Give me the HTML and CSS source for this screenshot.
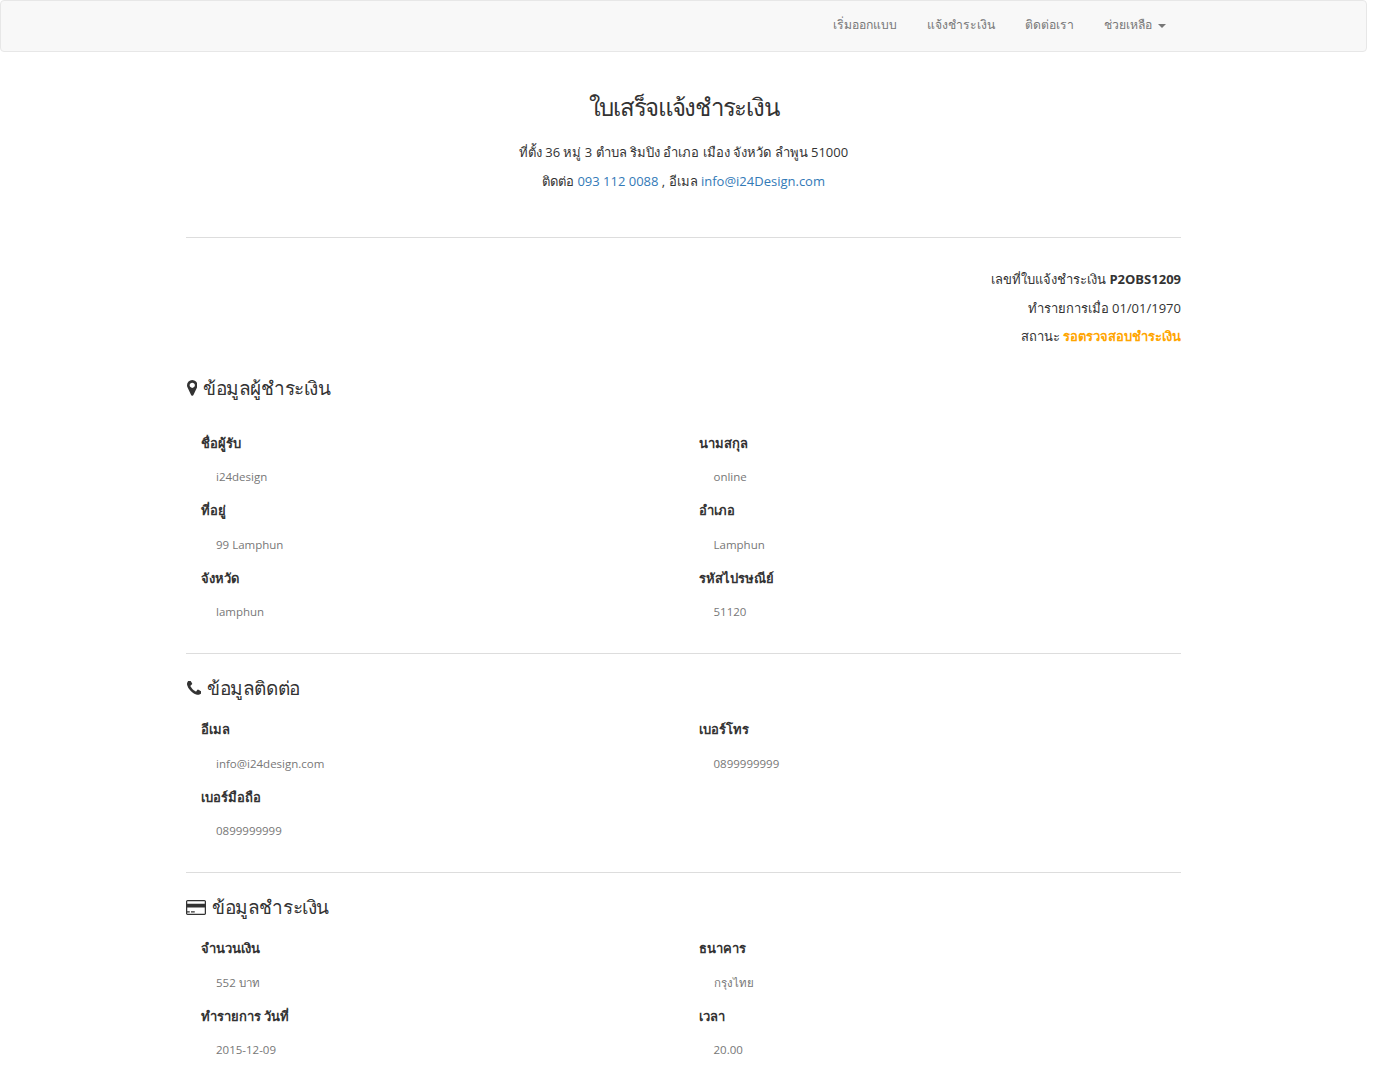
FILE: index.html
```html
<!DOCTYPE html>
<html lang="th">
<head>
<meta charset="utf-8">
<title>ใบเสร็จแจ้งชำระเงิน</title>
<link rel="stylesheet" href="styles.css">
</head>
<body>
<nav class="navbar">
  <ul class="nav">
    <li>เริ่มออกแบบ</li>
    <li>แจ้งชำระเงิน</li>
    <li>ติดต่อเรา</li>
    <li>ช่วยเหลือ <span class="caret"></span></li>
  </ul>
</nav>
<main class="container">
  <header class="head">
    <h2 class="title">ใบเสร็จแจ้งชำระเงิน</h2>
    <p>ที่ตั้ง 36 หมู่ 3 ตำบล ริมปิง อำเภอ เมือง จังหวัด ลำพูน 51000</p>
    <p>ติดต่อ <a href="#">093 112 0088</a> , อีเมล <a href="#">info@i24Design.com</a></p>
  </header>
  <hr>
  <section class="meta">
    <p>เลขที่ใบแจ้งชำระเงิน <b>P2OBS1209</b></p>
    <p>ทำรายการเมื่อ 01/01/1970</p>
    <p>สถานะ <b class="status">รอตรวจสอบชำระเงิน</b></p>
  </section>
  <h3 class="section first"><svg class="ico pin" viewBox="384 128 1024 1536"><path d="M1152 640q0-106-75-181t-181-75-181 75-75 181 75 181 181 75 181-75 75-181zm256 0q0 109-33 179l-364 774q-16 33-47.5 52t-67.5 19-67.5-19-46.5-52l-365-774q-33-70-33-179 0-212 150-362t362-150 362 150 150 362z"/></svg>ข้อมูลผู้ชำระเงิน</h3>
  <div class="grid">
    <div class="cell"><h5>ชื่อผู้รับ</h5><div class="val">i24design</div></div>
    <div class="cell"><h5>นามสกุล</h5><div class="val">online</div></div>
    <div class="cell"><h5>ที่อยู่</h5><div class="val">99 Lamphun</div></div>
    <div class="cell"><h5>อำเภอ</h5><div class="val">Lamphun</div></div>
    <div class="cell"><h5>จังหวัด</h5><div class="val">lamphun</div></div>
    <div class="cell"><h5>รหัสไปรษณีย์</h5><div class="val">51120</div></div>
  </div>
  <hr class="sep">
  <h3 class="section"><svg class="ico phone" viewBox="192 192 1408 1408"><path d="M1600 1240q0 27-10 70.5t-21 68.5q-21 50-122 106-94 51-186 51-27 0-53-3.5t-57.5-12.5-47-14.5-55.5-20.5-49-18q-98-35-175-83-127-79-264-216t-216-264q-48-77-83-175-3-9-18-49t-20.5-55.5-14.5-47-12.5-57.5-3.5-53q0-92 51-186 56-101 106-122 25-11 68.5-21t70.5-10q14 0 21 3 18 6 53 76 11 19 30 54t35 63.5 31 53.5q3 4 17.5 25t21.5 35.5 7 28.5q0 20-28.5 50t-62 55-62 53-28.5 46q0 9 5 22.5t8.5 20.5 14 24 11.5 19q76 137 174 235t235 174q2 1 19 11.5t24 14 20.5 8.5 22.5 5q18 0 46-28.5t53-62 55-62 50-28.5q14 0 28.5 7t35.5 21.5 25 17.5q25 15 53.5 31t63.5 35 54 30q70 35 76 53 3 7 3 21z"/></svg>ข้อมูลติดต่อ</h3>
  <div class="grid">
    <div class="cell"><h5>อีเมล</h5><div class="val">info@i24design.com</div></div>
    <div class="cell"><h5>เบอร์โทร</h5><div class="val">0899999999</div></div>
    <div class="cell"><h5>เบอร์มือถือ</h5><div class="val">0899999999</div></div>
  </div>
  <hr class="sep">
  <h3 class="section"><svg class="ico card" viewBox="0 128 2048 1536"><path d="M1888 128q66 0 113 47t47 113v1216q0 66-47 113t-113 47h-1728q-66 0-113-47t-47-113v-1216q0-66 47-113t113-47h1728zm-1728 128q-13 0-22.5 9.5t-9.5 22.5v224h1792v-224q0-13-9.5-22.5t-22.5-9.5h-1728zm1728 1280q13 0 22.5-9.5t9.5-22.5v-608h-1792v608q0 13 9.5 22.5t22.5 9.5h1728zm-1760-128v-128h256v128h-256zm384 0v-128h384v128h-384z"/></svg>ข้อมูลชำระเงิน</h3>
  <div class="grid">
    <div class="cell"><h5>จำนวนเงิน</h5><div class="val">552 บาท</div></div>
    <div class="cell"><h5>ธนาคาร</h5><div class="val">กรุงไทย</div></div>
    <div class="cell"><h5>ทำรายการ วันที่</h5><div class="val">2015-12-09</div></div>
    <div class="cell"><h5>เวลา</h5><div class="val">20.00</div></div>
  </div>
</main>
</body>
</html>
```
FILE: styles.css
```css
* { box-sizing: border-box; }
html, body { margin: 0; padding: 0; }
body {
  width: 1367px;
  font-family: "Open Sans", "Noto Sans", sans-serif;
  font-size: 13px;
  line-height: 1.42857;
  color: #333;
  background: #fff;
}
a { color: #337ab7; text-decoration: none; }
.navbar {
  height: 52px;
  background: #f8f8f8;
  border: 1px solid #e7e7e7;
  border-radius: 4px;
  display: flex;
  justify-content: flex-end;
  padding-right: 200px;
}
.nav { display: flex; list-style: none; margin: 0; padding: 0; gap: 30px; }
.nav li { color: #777; font-size: 12.2px; line-height: 48px; }
.caret {
  display: inline-block;
  margin-left: 3px;
  vertical-align: middle;
  border-top: 4px solid #777;
  border-left: 4px solid transparent;
  border-right: 4px solid transparent;
}
.container { width: 995px; margin: 0 auto; }
.head { text-align: center; padding-top: 40px; }
.title { font-size: 24px; letter-spacing: -1.3px; font-weight: 400; line-height: 29px; margin: 0 0 22px; }
p { margin: 0 0 10px; font-size: 13px; }
hr { border: 0; border-top: 1px solid #ddd; margin: 47px 0 32px; }
.meta { text-align: right; }
.status { color: orange; }
.section { font-size: 19px; letter-spacing: -0.4px; font-weight: 400; line-height: 22px; margin: 23px 0; display: flex; align-items: center; }
.section.first { margin: 31px 0 37px; }
.ico { fill: #333; flex: none; }
.pin { width: 10.5px; height: 15.75px; margin: 0 6px 0 0.5px; }
.phone { width: 14.5px; height: 14.5px; margin: 0 6px 0 0.5px; }
.card { width: 20px; height: 15px; margin: 0 6px 0 0; }
.grid { display: grid; grid-template-columns: 1fr 1fr; padding-bottom: 15px; }
.cell { padding: 0 15px; height: 67.5px; }
h5 { font-size: 13px; font-weight: 700; line-height: 15px; margin: 0; color: #333; }
.val { color: #777; font-size: 11.5px; padding: 19.5px 15px 0; line-height: 13px; }
.sep { margin: 0 0 23px; }
```
